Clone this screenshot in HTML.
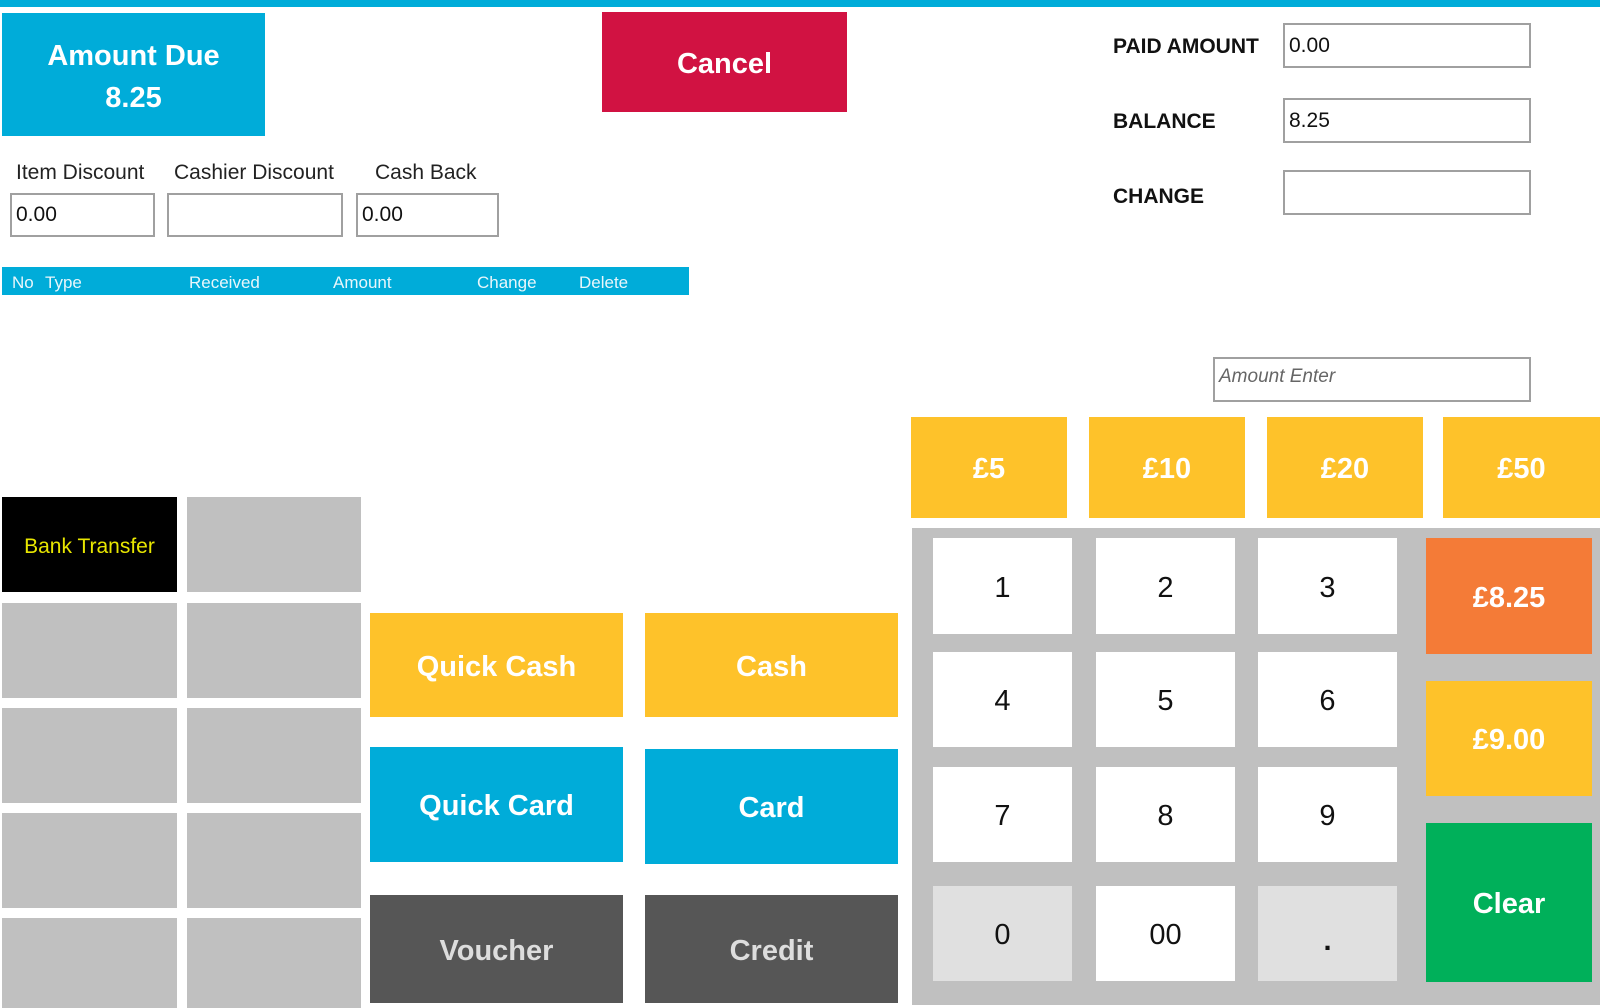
<!DOCTYPE html>
<html><head><meta charset="utf-8"><style>
*{margin:0;padding:0;box-sizing:border-box}
body{width:1600px;height:1008px;background:#fff;position:relative;overflow:hidden;font-family:"Liberation Sans","DejaVu Sans",sans-serif}
div{position:absolute}
.c{display:flex;align-items:center;justify-content:center;text-align:center;padding-top:4px}
.b{font-weight:bold;color:#fff}
.inp{border:2px solid #a0a0a0;background:#fff;font-size:21px;color:#111;padding-left:4px;display:flex;align-items:center}
.lbl{font-size:21px;color:#222}
.rl{font-size:21px;font-weight:bold;color:#111;left:1113px}
.g{background:#c0c0c0}
.k{background:#fff;font-size:29px;color:#111}
.y{background:#fec22a}
.bl{background:#00acd9}
.dk{background:#565656;color:#ddd}
.th{font-size:17px;color:#e8f6fb;top:273px}
</style></head><body>
<div style="left:0;top:0;width:1600px;height:7px;background:#00acd9"></div>
<div class="c b bl" style="left:2px;top:13px;width:263px;height:123px;font-size:29px;line-height:42px">Amount Due<br>8.25</div>
<div class="c b" style="left:602px;top:12px;width:245px;height:100px;background:#d11242;font-size:29px">Cancel</div>

<div class="lbl" style="left:16px;top:161px">Item Discount</div>
<div class="lbl" style="left:174px;top:161px">Cashier Discount</div>
<div class="lbl" style="left:375px;top:161px">Cash Back</div>
<div class="inp" style="left:10px;top:193px;width:145px;height:44px">0.00</div>
<div class="inp" style="left:167px;top:193px;width:176px;height:44px"></div>
<div class="inp" style="left:356px;top:193px;width:143px;height:44px">0.00</div>

<div style="left:2px;top:267px;width:687px;height:28px;background:#00acd9"></div>
<div class="th" style="left:12px">No</div>
<div class="th" style="left:45px">Type</div>
<div class="th" style="left:189px">Received</div>
<div class="th" style="left:333px">Amount</div>
<div class="th" style="left:477px">Change</div>
<div class="th" style="left:579px">Delete</div>

<div class="rl" style="top:35px">PAID AMOUNT</div>
<div class="rl" style="top:110px">BALANCE</div>
<div class="rl" style="top:185px">CHANGE</div>
<div class="inp" style="left:1283px;top:23px;width:248px;height:45px">0.00</div>
<div class="inp" style="left:1283px;top:98px;width:248px;height:45px">8.25</div>
<div class="inp" style="left:1283px;top:170px;width:248px;height:45px"></div>
<div class="inp" style="left:1213px;top:357px;width:318px;height:45px;font-style:italic;color:#666;font-size:19px;padding-bottom:6px">Amount Enter</div>

<div class="c y b" style="left:911px;top:417px;width:156px;height:101px;font-size:29px">£5</div>
<div class="c y b" style="left:1089px;top:417px;width:156px;height:101px;font-size:29px">£10</div>
<div class="c y b" style="left:1267px;top:417px;width:156px;height:101px;font-size:29px">£20</div>
<div class="c y b" style="left:1443px;top:417px;width:157px;height:101px;font-size:29px">£50</div>

<div class="g" style="left:912px;top:528px;width:688px;height:477px"></div>
<div class="c k" style="left:933px;top:538px;width:139px;height:96px">1</div>
<div class="c k" style="left:1096px;top:538px;width:139px;height:96px">2</div>
<div class="c k" style="left:1258px;top:538px;width:139px;height:96px">3</div>
<div class="c k" style="left:933px;top:652px;width:139px;height:95px">4</div>
<div class="c k" style="left:1096px;top:652px;width:139px;height:95px">5</div>
<div class="c k" style="left:1258px;top:652px;width:139px;height:95px">6</div>
<div class="c k" style="left:933px;top:767px;width:139px;height:95px">7</div>
<div class="c k" style="left:1096px;top:767px;width:139px;height:95px">8</div>
<div class="c k" style="left:1258px;top:767px;width:139px;height:95px">9</div>
<div class="c k" style="left:933px;top:886px;width:139px;height:95px;background:#e0e0e0">0</div>
<div class="c k" style="left:1096px;top:886px;width:139px;height:95px">00</div>
<div class="c k" style="left:1258px;top:886px;width:139px;height:95px;background:#e0e0e0;padding-top:16px;font-weight:bold">.</div>
<div class="c b" style="left:1426px;top:538px;width:166px;height:116px;background:#f47b37;font-size:29px">£8.25</div>
<div class="c b y" style="left:1426px;top:681px;width:166px;height:115px;font-size:29px">£9.00</div>
<div class="c b" style="left:1426px;top:823px;width:166px;height:159px;background:#00b05a;font-size:29px">Clear</div>

<div class="c" style="left:2px;top:497px;width:175px;height:95px;background:#000;color:#e8e600;font-size:21px">Bank Transfer</div>
<div class="g" style="left:187px;top:497px;width:174px;height:95px"></div>
<div class="g" style="left:2px;top:603px;width:175px;height:95px"></div>
<div class="g" style="left:187px;top:603px;width:174px;height:95px"></div>
<div class="g" style="left:2px;top:708px;width:175px;height:95px"></div>
<div class="g" style="left:187px;top:708px;width:174px;height:95px"></div>
<div class="g" style="left:2px;top:813px;width:175px;height:95px"></div>
<div class="g" style="left:187px;top:813px;width:174px;height:95px"></div>
<div class="g" style="left:2px;top:918px;width:175px;height:90px"></div>
<div class="g" style="left:187px;top:918px;width:174px;height:90px"></div>

<div class="c b y" style="left:370px;top:613px;width:253px;height:104px;font-size:29px">Quick Cash</div>
<div class="c b y" style="left:645px;top:613px;width:253px;height:104px;font-size:29px">Cash</div>
<div class="c b bl" style="left:370px;top:747px;width:253px;height:115px;font-size:29px">Quick Card</div>
<div class="c b bl" style="left:645px;top:749px;width:253px;height:115px;font-size:29px">Card</div>
<div class="c b dk" style="left:370px;top:895px;width:253px;height:108px;font-size:29px;color:#ddd">Voucher</div>
<div class="c b dk" style="left:645px;top:895px;width:253px;height:108px;font-size:29px;color:#ddd">Credit</div>
</body></html>
